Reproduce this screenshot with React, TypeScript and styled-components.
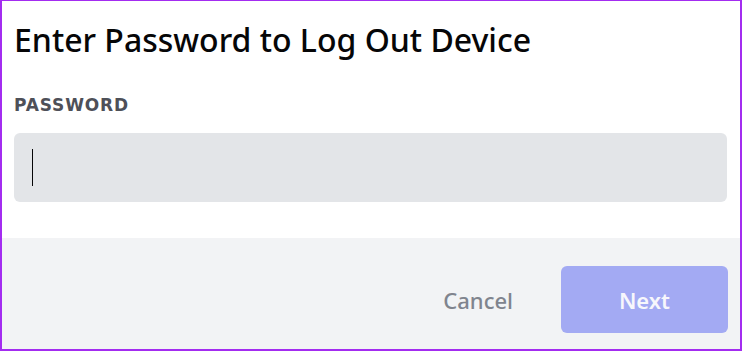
import React from "react";
import styled, { createGlobalStyle } from "styled-components";

const Global = createGlobalStyle`
  html, body { margin: 0; padding: 0; background: #ffffff; }
  body { font-family: "Noto Sans", "Open Sans", sans-serif; }
  * { box-sizing: border-box; }
`;

const Frame = styled.div`
  width: 742px;
  height: 351px;
  border: 2px solid #a32cf0;
  border-top-width: 1px;
  display: flex;
  flex-direction: column;
  background: #ffffff;
  overflow: hidden;
`;

const Body = styled.div`
  padding: 19px 12px 0 12px;
  height: 237px;
  display: flex;
  flex-direction: column;
`;

const Title = styled.h1`
  margin: 0;
  font-family: "Noto Sans", sans-serif;
  font-weight: 500;
  font-size: 32px;
  line-height: 40px;
  color: #060607;
`;

const Label = styled.label`
  margin-top: 34px;
  font-family: "DejaVu Sans", sans-serif;
  font-weight: 700;
  font-size: 17px;
  line-height: 22px;
  letter-spacing: 0.85px;
  color: #4e5058;
`;

const Input = styled.div`
  margin-top: 17px;
  height: 69px;
  width: 713px;
  background: #e3e5e8;
  border-radius: 6px;
  display: flex;
  align-items: center;
  padding-left: 18px;
`;

const Caret = styled.span`
  width: 1px;
  height: 37px;
  background: #060607;
`;

const Footer = styled.div`
  flex: 1;
  background: #f2f3f5;
  display: flex;
  align-items: flex-start;
  justify-content: flex-end;
  padding: 28px 12px 0 0;
  gap: 24px;
`;

const Button = styled.button<{ $primary?: boolean }>`
  border: none;
  font-family: "Noto Sans", sans-serif;
  font-weight: ${(p) => (p.$primary ? 600 : 500)};
  font-size: 22px;
  cursor: pointer;
  border-radius: 6px;
  height: 67px;
  width: ${(p) => (p.$primary ? "167px" : "auto")};
  padding: ${(p) => (p.$primary ? "0" : "0 24px")};
  background: ${(p) => (p.$primary ? "#a3aaf3" : "transparent")};
  color: ${(p) => (p.$primary ? "#f7f7fc" : "#80848e")};
`;

export default function App() {
  return (
    <>
      <Global />
      <Frame>
        <Body>
          <Title>Enter Password to Log Out Device</Title>
          <Label>PASSWORD</Label>
          <Input>
            <Caret />
          </Input>
        </Body>
        <Footer>
          <Button>Cancel</Button>
          <Button $primary>Next</Button>
        </Footer>
      </Frame>
    </>
  );
}
